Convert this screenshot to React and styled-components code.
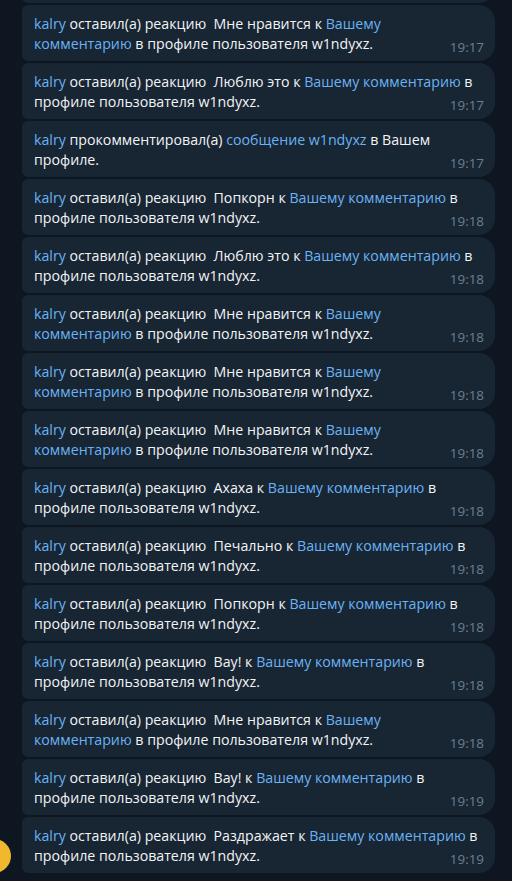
import React from 'react';
import styled, { createGlobalStyle } from 'styled-components';

const GlobalStyle = createGlobalStyle`
  html, body {
    margin: 0;
    padding: 0;
    background: #0e1621;
    overflow: hidden;
  }
  body {
    font-family: "Open Sans", "Noto Sans", sans-serif;
    -webkit-font-smoothing: antialiased;
  }
`;

const Chat = styled.div`
  height: 881px;
  overflow: hidden;
  background: #0e1621;
`;

const Group = styled.div`
  display: flex;
  align-items: flex-end;
  gap: 11px;
  margin-top: -53px;
  margin-left: -23px;
`;

const Avatar = styled.div`
  flex: none;
  width: 34px;
  height: 34px;
  border-radius: 50%;
  background: #f1b72d;
  margin-bottom: 9px;
`;

const List = styled.div`
  display: flex;
  flex-direction: column;
  gap: 2px;
  width: 473px;
  padding-bottom: 9px;
`;

const Bubble = styled.div`
  display: flex;
  align-items: flex-end;
  height: 56px;
  box-sizing: border-box;
  padding: 9px 11px 7px 12px;
  background: #182533;
  border-radius: 6px 16px 16px 6px;
`;

const Text = styled.div`
  flex: 1 1 0;
  min-width: 0;
  font-size: 14.2px;
  line-height: 20px;
  color: #f2f4f6;
  white-space: pre;
  align-self: flex-start;
`;

const Link = styled.span`
  color: #6ab3f3;
`;

const Time = styled.span`
  flex: none;
  font-size: 13.4px;
  line-height: 12px;
  color: #6d7f8f;
  margin-bottom: 1px;
`;

const tail = (reaction) =>
  reaction === 'Мне нравится'
    ? [[`реакцию  ${reaction} к `, ['Вашему']], [['комментарию'], ' в профиле пользователя w1ndyxz.']]
    : [[`реакцию  ${reaction} к `, ['Вашему комментарию'], ' в'], ['профиле пользователя w1ndyxz.']];

const reaction = (name, time) => {
  const [first, second] = tail(name);
  return { lines: [[['kalry'], ' оставил(а) ', ...first], second], time };
};

const messages = [
  // previous message, scrolled out of view above the top edge
  { lines: [], time: '' },
  reaction('Мне нравится', '19:17'),
  reaction('Люблю это', '19:17'),
  {
    lines: [[['kalry'], ' прокомментировал(а) ', ['сообщение w1ndyxz'], ' в Вашем'], ['профиле.']],
    time: '19:17',
  },
  reaction('Попкорн', '19:18'),
  reaction('Люблю это', '19:18'),
  reaction('Мне нравится', '19:18'),
  reaction('Мне нравится', '19:18'),
  reaction('Мне нравится', '19:18'),
  reaction('Ахаха', '19:18'),
  reaction('Печально', '19:18'),
  reaction('Попкорн', '19:18'),
  reaction('Вау!', '19:18'),
  reaction('Мне нравится', '19:18'),
  reaction('Вау!', '19:19'),
  reaction('Раздражает', '19:19'),
];

function Message({ lines, time }) {
  return (
    <Bubble>
      <Text>
        {lines.map((line, i) => (
          <div key={i}>
            {line.map((part, j) =>
              Array.isArray(part) ? <Link key={j}>{part[0]}</Link> : <span key={j}>{part}</span>
            )}
          </div>
        ))}
      </Text>
      {time && <Time>{time}</Time>}
    </Bubble>
  );
}

export default function App() {
  return (
    <Chat>
      <GlobalStyle />
      <Group>
        <Avatar />
        <List>
          {messages.map((m, i) => (
            <Message key={i} {...m} />
          ))}
        </List>
      </Group>
    </Chat>
  );
}
